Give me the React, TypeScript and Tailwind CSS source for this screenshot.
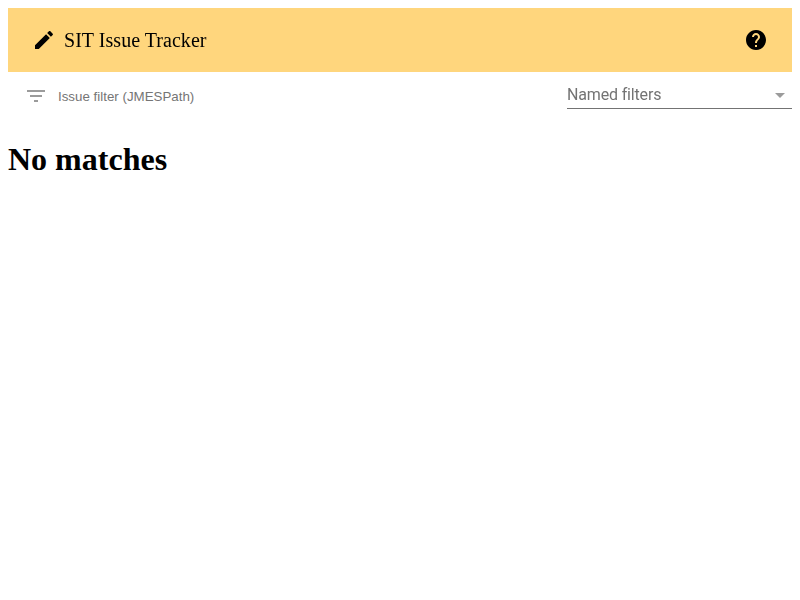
import React from 'react';

function Icon({ d, className }: { d: string; className?: string }) {
  return (
    <svg viewBox="0 0 24 24" className={`block size-6 shrink-0 fill-current ${className ?? ''}`} aria-hidden="true">
      <path d={d} />
    </svg>
  );
}

const EDIT = 'M3 17.25V21h3.75L17.81 9.94l-3.75-3.75L3 17.25zM20.71 7.04c.39-.39.39-1.02 0-1.41l-2.34-2.34c-.39-.39-1.02-.39-1.41 0l-1.83 1.83 3.75 3.75 1.83-1.83z';
const HELP = 'M12 2C6.48 2 2 6.48 2 12s4.48 10 10 10 10-4.48 10-10S17.52 2 12 2zm1 17h-2v-2h2v2zm2.07-7.75l-.9.92C13.45 12.9 13 13.5 13 15h-2v-.5c0-1.1.45-2.1 1.17-2.83l1.24-1.26c.37-.36.59-.86.59-1.41 0-1.1-.9-2-2-2s-2 .9-2 2H8c0-2.21 1.79-4 4-4s4 1.79 4 4c0 .88-.36 1.68-.93 2.25z';
const FILTER = 'M10 18h4v-2h-4v2zM3 6v2h18V6H3zm3 7h12v-2H6v2z';
const ARROW = 'M7 10l5 5 5-5z';

export default function App() {
  return (
    <div className="p-2 font-['Liberation_Serif',serif] text-black">
      <header className="flex h-16 items-center bg-[#ffd67d] px-6">
        <Icon d={EDIT} />
        <span className="ml-2 flex-1 text-xl tracking-[0.04px] will-change-transform">SIT Issue Tracker</span>
        <button aria-label="Help"><Icon d={HELP} /></button>
      </header>
      <div className="flex h-[49px]">
        <div className="flex h-12 flex-1 items-center pl-4">
          <Icon d={FILTER} className="text-[#9b9b9b]" />
          <input
            placeholder="Issue filter (JMESPath)"
            className="mt-px ml-2.5 h-[21px] w-60 bg-transparent font-['Liberation_Sans',sans-serif] text-[13.333px] outline-none placeholder:text-[#757575]"
          />
        </div>
        <div className="flex h-[37px] w-[225px] items-end border-b border-[#737373] pb-px text-[#737373]">
          <span className="flex-1 font-[Roboto,sans-serif] text-base leading-6 tracking-[-0.16px] will-change-transform">Named filters</span>
          <Icon d={ARROW} className="text-[#9b9b9b]" />
        </div>
      </div>
      <h1 className="mt-5 text-[32px] leading-[37px] font-bold">No matches</h1>
    </div>
  );
}
